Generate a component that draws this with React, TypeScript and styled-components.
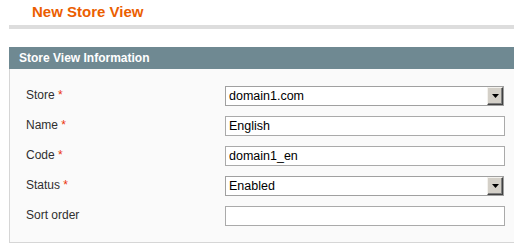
import React from "react"
import styled, { createGlobalStyle } from "styled-components"

const GlobalStyle = createGlobalStyle`
  html, body {
    margin: 0;
    padding: 0;
    background: #fff;
    overflow: hidden;
  }
  body {
    font-family: "Liberation Sans", Arial, sans-serif;
    font-size: 12px;
    color: #2f2f2f;
  }
`

type Field = {
  label: string
  required?: boolean
  kind: "select" | "text"
  value: string
}

const fields: Field[] = [
  { label: "Store", required: true, kind: "select", value: "domain1.com" },
  { label: "Name", required: true, kind: "text", value: "English" },
  { label: "Code", required: true, kind: "text", value: "domain1_en" },
  { label: "Status", required: true, kind: "select", value: "Enabled" },
  { label: "Sort order", kind: "text", value: "" },
]

export default function App() {
  return (
    <>
      <GlobalStyle />
      <Page>
        <ContentHeader>
          <Title>New Store View</Title>
        </ContentHeader>
        <Section>
          <SectionHead>Store View Information</SectionHead>
          <Fieldset>
            <FormGrid>
              {fields.map(f => (
                <React.Fragment key={f.label}>
                  <Label>
                    {f.label}
                    {f.required && <Required> *</Required>}
                  </Label>
                  {f.kind == "select" ? (
                    <Select>
                      <span className="value">{f.value}</span>
                      <DropButton>
                        <svg width="7" height="4" viewBox="0 0 7 4">
                          <path d="M0 0h7L3.5 4z" fill="#000" />
                        </svg>
                      </DropButton>
                    </Select>
                  ) : (
                    <TextInput type="text" value={f.value} readOnly />
                  )}
                </React.Fragment>
              ))}
            </FormGrid>
          </Fieldset>
        </Section>
      </Page>
    </>
  )
}

const Page = styled.div`
  padding-left: 9px;
`

const ContentHeader = styled.div`
  border-bottom: 4px solid #dddddd;
  margin-bottom: 18px;
`

const Title = styled.h3`
  margin: 0;
  padding: 3px 0 4px 23px;
  height: 18px;
  line-height: 18px;
  font-size: 15px;
  font-weight: bold;
  color: #eb5e00;
`

const Section = styled.div``

const SectionHead = styled.div`
  height: 22px;
  line-height: 22px;
  padding-left: 10px;
  background: #6f8992;
  color: #fff;
  font-weight: bold;
  font-size: 12px;
`

const Fieldset = styled.div`
  background: #fafafa;
  border-left: 1px solid #d6d6d6;
  border-bottom: 1px solid #d6d6d6;
  padding: 17px 0 16px 16px;
`

const FormGrid = styled.div`
  display: grid;
  grid-template-columns: 199px 280px;
  row-gap: 10px;
`

const Label = styled.div`
  padding-top: 1px;
  line-height: 16px;
  font-size: 12px;
  color: #2f2f2f;
`

const Required = styled.span`
  color: #eb340a;
`

const TextInput = styled.input`
  box-sizing: border-box;
  width: 280px;
  height: 20px;
  margin: 0;
  padding: 0 3px;
  border: 1px solid #aaaaaa;
  background: #fff;
  font-family: "Liberation Sans", Arial, sans-serif;
  font-size: 12.5px;
  color: #000;
  outline: none;
`

const Select = styled.div`
  box-sizing: border-box;
  width: 279px;
  height: 20px;
  display: flex;
  align-items: center;
  border: 1px solid #a0a0a0;
  background: #fff;
  font-size: 12.5px;
  color: #000;
  .value {
    flex: 1;
    padding-left: 3px;
  }
`

const DropButton = styled.span`
  box-sizing: border-box;
  width: 16px;
  height: 18px;
  display: flex;
  align-items: center;
  justify-content: center;
  background: #d4d0c8;
  border-top: 1px solid #f4f2ee;
  border-left: 1px solid #f4f2ee;
  border-right: 1px solid #404040;
  border-bottom: 1px solid #404040;
  box-shadow: inset -1px -1px 0 #808080;
`
